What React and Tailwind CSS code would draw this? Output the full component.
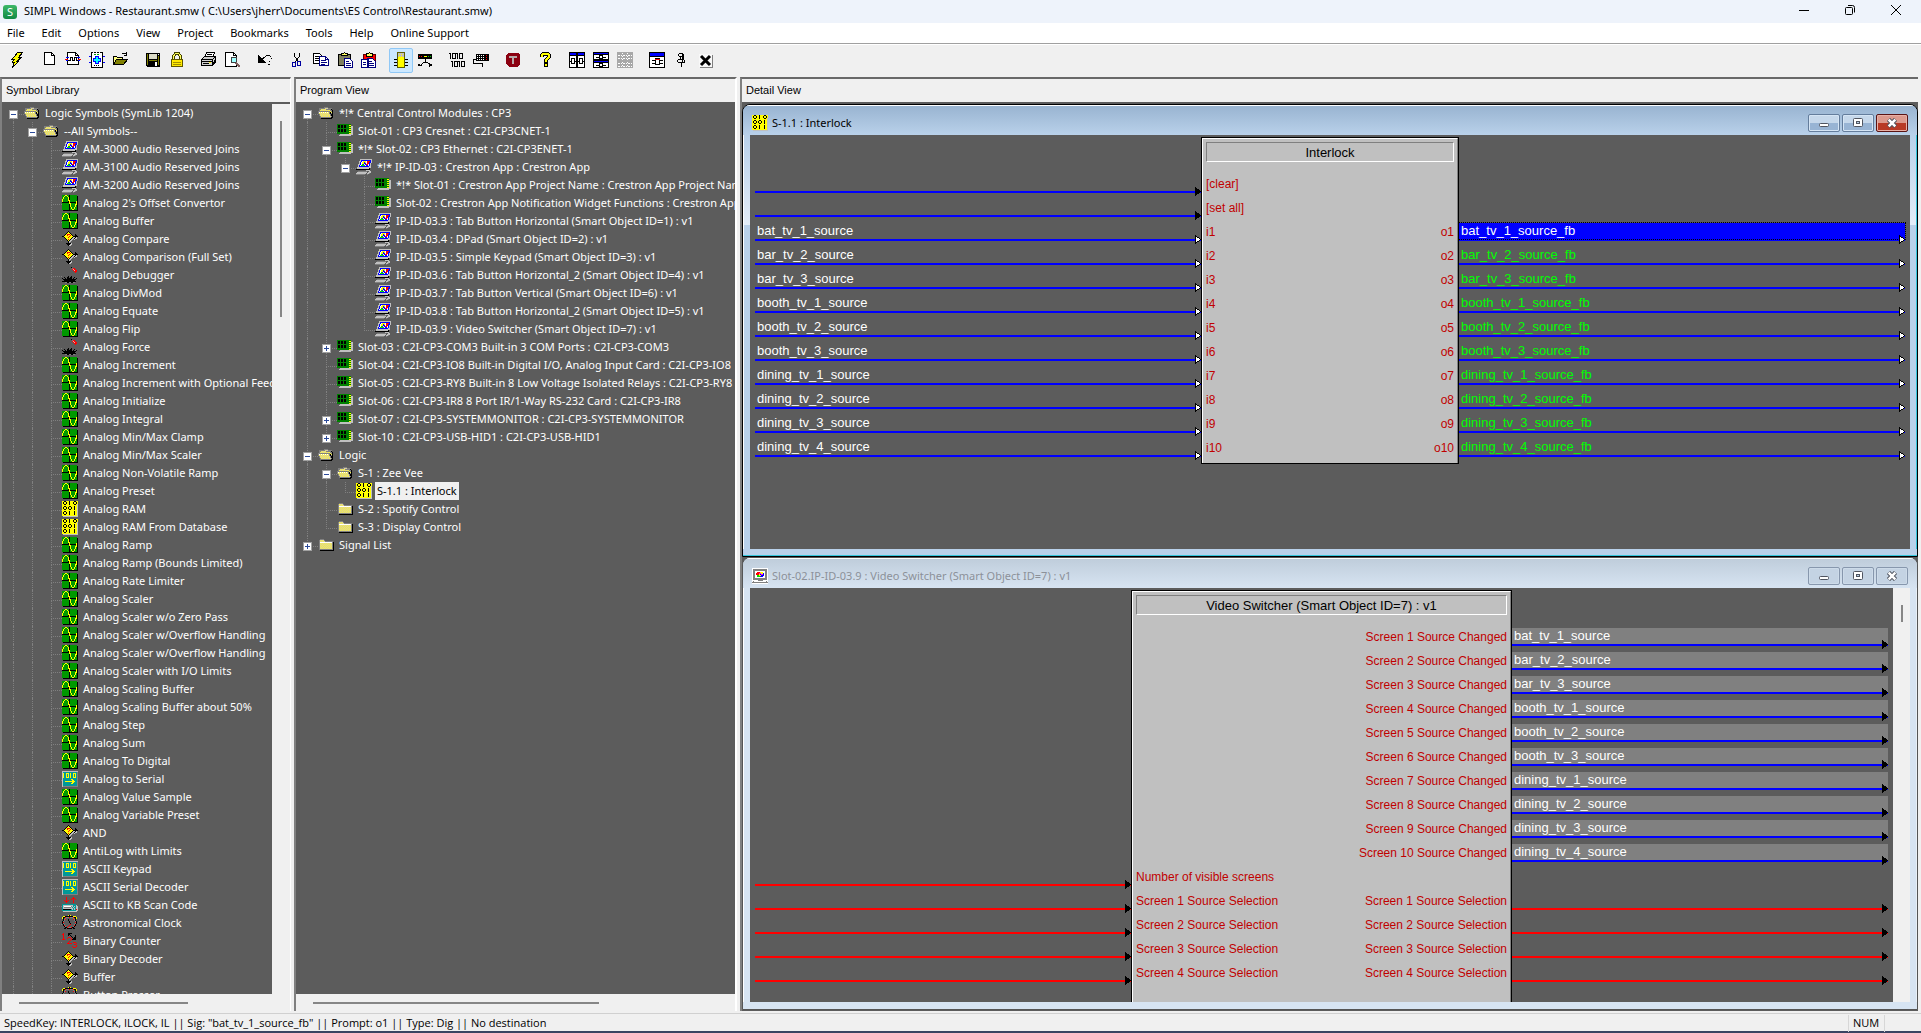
import React from "react";

const COLORS = {
  k: "#000000", w: "#ffffff", y: "#ffff00", o: "#808000", g: "#009900", G: "#008000",
  b: "#0000ff", r: "#ff0000", s: "#c0c0c0", d: "#808080", n: "#000080", m: "#800000",
  c: "#00ffff", t: "#009999", l: "#00e000", a: "#d8d0a0", Y: "#f8f048", p: "#ff00ff",
};

const MAPS = {
  sine: [
    "gggyyggkggggggg.", "ggyggygkgggggggk", "gyggggykgggggggk", "gyggggykgggggggk",
    "ygggggykgggggggk", "ygggggyygggggggk", "ygggggkyggggggyk", "kkkkkkkykkkkkkyk",
    "gggggggyygggggyk", "gggggggkyggggyyk", "gggggggkyggggygk", "gggggggkyggggygk",
    "gggggggkgyggyggk", "gggggggkgyggyggk", "gggggggkggyygggk", ".kkkkkkkkkkkkkkk",
  ],
  ram: [
    "yykkyyykyyyykkyy", "ykyykyykyyykyyky", "ykyykyykyyykyyky", "yykkyyykyyyykkys",
    "yyyyyyyyyyyyyyys", "yykkyyykkyyykyys", "ykyykykyykyykyys", "ykyykykyykyykyys",
    "yykkyyykkyyykyys", "yyyyyyyyyyyyyyys", "yykkyyykyyyykyys", "ykyykyykyyyykyys",
    "ykyykyykyyyykyys", "yykkyyykyyyykyys", "yyyyyyyyyyyyyyys", ".sssssssssssssss",
  ],
  panel: [
    "....ssssssssssss", "....sbbbbbbbbbbs", "...ssbwyyywrrrbs", "...sbwyybywrrbbs",
    "...sbwyybbwrrbs.", "..ssbwlbwbrrwbs.", "..sbwllllwbbwbs.", "..sbbbbbbbbbbss.",
    ".ssssssssssssss.", ".ssssssssssssk..", "kkkkkkkkkkkkkk..", "..........ssss..",
    "..ddddddddd..ss.", ".ssssssssss.sss.", "ssssssssss.ssd..", "ddddddddd..d....",
  ],
  card: [
    "................", "GGGGGGGGGGGGGG..", "GkkGkkGkkGGGyy..", "GkkGkkGkkGGGGGss",
    "GkkGkkGkkGGGyyss", "GGGGGGGGGGGGGGss", "GkkGkkGkkGGGyyss", "GkkGkkGkkGGGGGss",
    "GkkGkkGkkGGGyyss", "GGGGGGGGGGGGGGss", "GGGGGGGGGGGGyyss", "...sssssssssssss",
    "..ssssssssssss..", "................", "................", "................",
  ],
  folderOpen: [
    "................", "................", "......dddd......", ".ddddddaaadddd..",
    ".ddYaYaYdddddk..", ".dYaYaYaYaYYddk.", "ddddddddddddYdk.", "dwYwYwYwYwYdkYk.",
    "dYaYaYaYaYadkdk.", ".dYaYaYaYaYadkk.", ".daYaYaYaYaYdkk.", "..dYaYaYaYaYadk.",
    "..dddddddddddkk.", "...kkkkkkkkkkk..", "................", "................",
  ],
  folder: [
    "................", "................", "..dddd..........", ".dYaYad.........",
    ".daYaYadddddddd.", ".dwwwwwwwwwwwwdk", ".dYaYaYaYaYaYadk", ".daYaYaYaYaYaYdk",
    ".dYaYaYaYaYaYadk", ".daYaYaYaYaYaYdk", ".dYaYaYaYaYaYadk", ".daYaYaYaYaYaYdk",
    ".ddddddddddddddk", "..kkkkkkkkkkkkkk", "................", "................",
  ],
  gate: [
    "......k.........", ".....kyk........", "....kyyyk.......", "...kyrrryk...k..",
    "..kyyryyryk..kk.", "kkyyyyyryyykkkkk", "..kyyyryyykssks.", "...kyyyyyksskss.",
    "....kyrykss.s...", ".....kykss......", "......kss.......", "......ks........",
    "....kkkkks......", ".....kkkss......", "......kss.......", "................",
  ],
  debug: [
    ".........k......", "..........drr...", "..........rsrr..", "...........rsrr.",
    "............rrr.", ".............r..", "................", "................",
    "................", "......k..k......", "..k..kk.kk..k...", "k..k.kkkkk.k..k.",
    ".kkkkkkkkkkkkk..", "..kkkkkkkkkkk...", "kkkkkkkkkkkkkk..", "...ddkkddkkdd...",
  ],
  serial: [
    "ssssssssssssssss", "sttttttttttttttd", "syttyyytyttyyytd", "syttytytyttytytd",
    "syttytytyttytytd", "syttytytyttytytd", "syttyyytyttyyytd", "sttttttttttttttd",
    "sttttttttyyttttd", "stttttttttyytttd", "sttyyyyyyyyyyttd", "stttttttttyytttd",
    "sttttttttyyttttd", "sttttttttttttttd", "sttttttttttttttd", "sddddddddddddddd",
  ],
  scan: [
    "....r......r....", "....r.....rrr...", "....r....r.r.r..", "..r.r.r....r....",
    "...rrr.....r....", "....r......r....", "................", "tttttttttttttt..",
    "tssssssssssttts.", "tswwwwwwwdststss", "tsdddddddststtss", "tsssssssssststss",
    "tkkkkkkkktststrs", "ttttttttttttttss", ".ssssssssssssss.", "................",
  ],
  clock: [
    "......yky.......", ".yykkkkkkkkyyy..", "ykkrdddrdddrkky.", "yk.d.......d.ky.",
    ".kdr..k....rdk..", ".kd...k.....dk..", "kd.....k.....dk.", "kr.....k.....rk.",
    "kd......k....dk.", ".kd.....r...dk..", ".kr....r....rk..", "..kd..r....dk...",
    "...kkrdddrkk....", "..kk.kkkkk.kk...", "................", "................",
  ],
  counter: [
    ".r....kkkk......", "rr....kk........", ".r....k.k....k..", ".r.......k...k..",
    ".r....rrr.k.kk..", ".r...r...r.kkk..", "rrr......rkkkk..", "........r.......",
    ".......r........", "......r....rrr..", ".....rrrrr....r.", "............rr..",
    "..............r.", "..........r...r.", "...........rrr..", "................",
  ],
  monitor: [
    "wwwwwwwwwwwwwwww", "wddddddddddddddw", "wddddddddddddddw", "wddwwwwwwwwwwddw",
    "wddwwrrryyywwddw", "wddwrrrppyybwddw", "wddwrrrybppbwddw", "wddwwllyybbbwddw",
    "wddwwlllbbbwwddw", "wddwwwwwwwwwwddw", "wddddddddddddddw", "wddddddddddddddw",
    "wwwwwwdddddwwwww", "wdwwwwwwwwwwwwdw", "dddddddddddddddd", "wwwwwwwwwwwwwwww",
  ],
};

function Pix({ name }) {
  const rects = [];
  MAPS[name].forEach((row, y) => {
    let x = 0;
    while (x < row.length) {
      let end = x + 1;
      while (end < row.length && row[end] === row[x]) end += 1;
      if (COLORS[row[x]]) {
        rects.push(<rect key={`${x}-${y}`} x={x} y={y} width={end - x} height="1" fill={COLORS[row[x]]} />);
      }
      x = end;
    }
  });
  return (
    <svg viewBox="0 0 16 16" className="size-4 shrink-0" shapeRendering="crispEdges" aria-hidden="true">
      {rects}
    </svg>
  );
}

/* ---------- Toolbar drawings ---------- */

const TOOLS = {
  bolt: <path d="M8.5.5h5l-4 5h3l-5 4h2l-6 6 2-5.500h-2l2-3h-2z" fill="#ff0" stroke="#000" />,
  page: <g><path d="M3.500.5h7l3 3v9h-10z" fill="#fff" stroke="#000" /><path d="M10.500.5v3h3" stroke="#000" /></g>,
  pageSym: (
    <g>
      <path d="M2.500.5h8l3 3v9h-11z" fill="#fff" stroke="#000" />
      <path d="M10.500.5v3h3" stroke="#000" />
      <path d="M1 5.500h3M1 8.500h3M12 5.500h3M12 8.500h3" stroke="#00f" />
      <path d="M0 7.500h3M13 7.500h3" stroke="#f00" />
      <path d="M3 8.500h2v-3h2v3h2v-3h2v3h2" stroke="#000" />
    </g>
  ),
  chip: (
    <g>
      <path d="M2.500.5h11v15h-11z" fill="#fff" />
      <path d="M2.500 0v16M13.500 0v16M2 15.500h12" stroke="#000" />
      <path d="M2 .5h12" stroke="#000" strokeDasharray="2 1" />
      <path d="M5 2.500h6" stroke="#00a000" strokeWidth="1" strokeDasharray="2 1" />
      <path d="M0 4.500h2M14 4.500h2M0 10.500h2M14 10.500h2" stroke="#00f" />
      <path d="M6.500 4.500h3v2h2v3h-2v2h-3v-2h-2v-3h2z" fill="#0ff" stroke="#00f" />
      <path d="M5 13.500h6" stroke="#000" strokeDasharray="1 1" />
    </g>
  ),
  open: (
    <g>
      <path d="M.5 12.500v-8h3l1 1h5v2" fill="#ffff80" stroke="#000" />
      <path d="M.5 12.500l3-5h11l-4 5z" fill="#808000" stroke="#000" />
      <path d="M8.500 2.500c1-2 3-2 5 0M13.500 0v3.500h-3" stroke="#000" />
    </g>
  ),
  save: (
    <g>
      <path d="M1 1h14v14H2l-1-1z" fill="#000" /><path d="M2 2h1v11H2zM13 4h1v9h-1zM4 8h8v1H4z" fill="#808000" />
      <path d="M4 2h8v5H4z" fill="#dcdcc8" /><path d="M10 10h2v4h-2z" fill="#fff" /><path d="M13 2h1v1h-1z" fill="#fff" />
    </g>
  ),
  lock: (
    <g>
      <path d="M4.500 8V4l2-2.500h3l2 2.500v4" stroke="#404000" strokeWidth="3" />
      <path d="M4.500 8V4l2-2.500h3l2 2.500v4" stroke="#ffff60" />
      <path d="M2.500 7.500h11v7h-11z" fill="#ffe800" stroke="#605800" /><path d="M4 10.500h8M4 12.500h8" stroke="#a09000" />
    </g>
  ),
  print: (
    <g>
      <path d="M5.500.5h8l-2 5h-8z" fill="#fff" stroke="#000" /><path d="M6 2.500h5M5 4.500h5" stroke="#000" />
      <path d="M.5 7.500l3-3h11v6l-3 3H.5z" fill="#d0d0d0" stroke="#000" />
      <path d="M.5 7.500h11v6M11.500 7.500l3-3M1 9.500h10M2 11.500h6M12 11.500l3-3M13 9.500l2-2" stroke="#000" />
      <path d="M8 10.500h2" stroke="#ff0" />
    </g>
  ),
  preview: (
    <g>
      <path d="M.5.5h8l3 3v10.500H.5z" fill="#fff" stroke="#000" /><path d="M8.500.5v3h3" stroke="#000" />
      <circle cx="9" cy="8" r="3" fill="#a0ffff" stroke="#404040" /><path d="M11 11l4 4" stroke="#806060" strokeWidth="2" />
    </g>
  ),
  undo: (
    <g>
      <path d="M1 3v8h8z" fill="#000" /><path d="M4 8l5-4 3-1 2 2v3l-2 2" stroke="#000" strokeDasharray="9 1 2 1 1 1 1 1" />
      <path d="M11 12.500h2M8 10.500h1" stroke="#000" />
    </g>
  ),
  cut: (
    <g>
      <path d="M5.500 1v3l4 6M10.500 1v3l-4 6" stroke="#000" />
      <g stroke="#0000a0"><rect x="8.500" y="9.500" width="3" height="4" rx="1" /><rect x="3.500" y="10.500" width="3" height="4" rx="1" /></g>
    </g>
  ),
  copy: (
    <g>
      <path d="M.5 1.500h6l2 2v8h-8z" fill="#fff" stroke="#000" />
      <path d="M2 4.500h4M2 6.500h5M2 8.500h4" stroke="#000" />
      <path d="M6.500 4.500h6l3 3v6h-9z" fill="#fff" stroke="#000080" />
      <path d="M12.500 4.500v3h3M8 8.500h5M8 10.500h6M8 12.500h4" stroke="#000080" />
    </g>
  ),
  paste: (
    <g>
      <path d="M1.500 2.500h12v11h-12z" fill="#808060" stroke="#000" /><path d="M4.500 3.500v-2h2l1-1 1 1h2v2z" fill="#ffff60" stroke="#000" />
      <path d="M7.500 6.500h5l3 3v6h-8z" fill="#fff" stroke="#000080" /><path d="M9 9.500h3M9 11.500h5M9 13.500h5" stroke="#000080" />
    </g>
  ),
  pasteSpecial: (
    <g>
      <path d="M2.500 2.500h12v11h-12z" fill="#f00" stroke="#600000" /><path d="M5.500 4.500v-3h2l1-1 1 1h2v3z" fill="#ffff60" stroke="#000" />
      <path d="M.5 7.500h7v8h-7zM6.500 6.500h5l3 3v6h-8z" fill="#fff" stroke="#000080" />
      <path d="M2 10.500h3M2 12.500h3M8 9.500h3M8 11.500h5M8 13.500h5" stroke="#000080" />
    </g>
  ),
  device: (
    <g>
      <path d="M1 7.500h14M1 10.500h14M1 13.500h14" stroke="#000" />
      <path d="M4.500.5h7v15h-7z" fill="#ff0" stroke="#606000" />
      <path d="M5 1h6v4H5z" fill="#c0c0c0" /><path d="M6 2.500h4M6 4.500h4" stroke="#ff0" strokeDasharray="1 1" />
    </g>
  ),
  network: (
    <g>
      <path d="M1 2h14v5H1z" fill="#000" /><path d="M2 4.500h4" stroke="#f00" strokeDasharray="1 1" /><path d="M7 4.500h3" stroke="#ff0" /><path d="M11 4.500h3" stroke="#0c0" strokeDasharray="1 1" />
      <path d="M8.500 7v3h-2l-2 3H2M8.500 10h2l2 3H15M3.500 11.500l-2 1.500 2 1.500M12.500 11.500l2 1.500-2 1.500" stroke="#000" />
    </g>
  ),
  bits: (
    <g stroke="#000">
      <path d="M1.500 1v6M8.500 1v6M0 1.500h2M7 1.500h2M3.500 9v6M10.500 9v6M2 9.500h2M9 9.500h2" />
      <rect x="3.500" y="1.500" width="3" height="5" rx="1" /><rect x="10.500" y="1.500" width="3" height="5" rx="1" />
      <rect x="5.500" y="9.500" width="3" height="5" rx="1" /><rect x="12.500" y="9.500" width="3" height="5" rx="1" />
    </g>
  ),
  keyboard: (
    <g>
      <path d="M3 2h13v7H3z" fill="#000" /><path d="M4 3.500h8M4 5.500h8M4 7.500h8" stroke="#fff" strokeDasharray="1 1" />
      <path d="M13 3.500h2M13 5.500h2M13 7.500h2" stroke="#f00" strokeDasharray="1 1" /><path d="M2.500 7.500h-2v4h9v3" stroke="#000" />
    </g>
  ),
  shield: (
    <g>
      <path d="M3 1h10l2 2v9l-3 3H4l-3-3V3z" fill="#8b0010" /><path d="M4 4h8v2H9v6H7V6H4z" fill="#b8a8a8" />
    </g>
  ),
  help: (
    <g>
      <path d="M5 5V3l2-1.500h3L12 3v2L9 8v3" stroke="#000" strokeWidth="4" />
      <path d="M5 5V3l2-1.500h3L12 3v2L9 8v2" stroke="#ff0" strokeWidth="2" />
      <path d="M7.500 11.500h3v3h-3z" fill="#ff0" stroke="#000" />
    </g>
  ),
  tileV: (
    <g>
      <path d="M0 0h16v16H0z" fill="#000" /><path d="M1 1h6v2H1zM9 1h6v2H9z" fill="#00f" /><path d="M1 4h6v11H1zM9 4h6v11H9z" fill="#fff" />
      <path d="M2.500 6.500h3v5h-3zM10.500 6.500h3v5h-3zM0 9.500h2M14 9.500h2M6 9.500h4" stroke="#000" />
    </g>
  ),
  tileH: (
    <g>
      <path d="M0 0h16v16H0z" fill="#000" /><path d="M1 1h14v1H1zM1 9h14v1H1z" fill="#00f" /><path d="M1 3h14v4H1zM1 11h14v4H1z" fill="#fff" />
      <path d="M6.500 3.500h3v3h-3zM6.500 11.500h3v3h-3zM3 5.500h3M10 5.500h3M3 13.500h3M10 13.500h3" stroke="#000" />
    </g>
  ),
  cascade: (
    <g>
      <path d="M0 0h16v16H0z" fill="#a8a8a8" />
      <path d="M1 3.500h14M1 6.500h14M1 11.500h14M1 14.500h14" stroke="#fff" strokeDasharray="2 1 1 1" />
      <path d="M5.500 1v14M10.500 1v14" stroke="#fff" strokeDasharray="1 2" />
    </g>
  ),
  windowChip: (
    <g>
      <path d="M.5.5h15v15H.5z" fill="#fff" stroke="#000" /><path d="M1 1h14v3H1z" fill="#00f" /><path d="M1 4.500h14" stroke="#000" />
      <path d="M6.500 6.500h4v6h-4z" fill="#fff" stroke="#000" /><path d="M6 7.500h5" stroke="#f00" /><path d="M3 8.500h3M3 11.500h3M11 8.500h3M11 11.500h3" stroke="#000" />
    </g>
  ),
  pin: (
    <g stroke="#000">
      <path d="M6 1.500h4M5.500 2v2M10.500 2v2M6 4.500h5M7.500 5v2M10.500 5v2M5 7.500h6M4.500 8v2M11.500 8v2M5 10.500h7" />
      <path d="M9.500 2v8" /><path d="M8.500 11v4" />
    </g>
  ),
  close: (
    <g>
      <path d="M2 2h13v13H2z" fill="#f8f8f8" /><path d="M15.500 3v12.500H3" stroke="#808080" />
      <path d="M4 4l9 9M13 4l-9 9" stroke="#000" strokeWidth="3" shapeRendering="auto" />
    </g>
  ),
};

const TOOL_GROUPS = [
  [["bolt", "Speed key"]],
  [["page", "New"], ["pageSym", "New symbol"], ["chip", "New macro"], ["open", "Open"]],
  [["save", "Save"], ["lock", "Protect"]],
  [["print", "Print"], ["preview", "Print preview"]],
  [["undo", "Undo"]],
  [["cut", "Cut"], ["copy", "Copy"], ["paste", "Paste"], ["pasteSpecial", "Paste special"]],
  [["device", "Program manager"], ["network", "Configure"]],
  [["bits", "Compile"], ["keyboard", "Transfer"]],
  [["shield", "Toolbox"]],
  [["help", "Help"]],
  [["tileV", "Tile vertically"], ["tileH", "Tile horizontally"], ["cascade", "Cascade"]],
  [["windowChip", "Symbol window"], ["pin", "Pin"], ["close", "Close"]],
];

/* ---------- Tree data ---------- */

const kinds = { s: "sine", p: "panel", g: "gate", d: "debug", r: "ram", t: "serial", k: "scan", c: "clock", n: "counter" };

const SYMBOLS = [
  "p:AM-3000 Audio Reserved Joins", "p:AM-3100 Audio Reserved Joins", "p:AM-3200 Audio Reserved Joins",
  "s:Analog 2's Offset Convertor", "s:Analog Buffer", "g:Analog Compare", "g:Analog Comparison (Full Set)",
  "d:Analog Debugger", "s:Analog DivMod", "s:Analog Equate", "s:Analog Flip", "d:Analog Force",
  "s:Analog Increment", "s:Analog Increment with Optional Feedback", "s:Analog Initialize", "s:Analog Integral",
  "s:Analog Min/Max Clamp", "s:Analog Min/Max Scaler", "s:Analog Non-Volatile Ramp", "s:Analog Preset",
  "r:Analog RAM", "r:Analog RAM From Database", "s:Analog Ramp", "s:Analog Ramp (Bounds Limited)",
  "s:Analog Rate Limiter", "s:Analog Scaler", "s:Analog Scaler w/o Zero Pass", "s:Analog Scaler w/Overflow Handling",
  "s:Analog Scaler w/Overflow Handling", "s:Analog Scaler with I/O Limits", "s:Analog Scaling Buffer",
  "s:Analog Scaling Buffer about 50%", "s:Analog Step", "s:Analog Sum", "s:Analog To Digital",
  "t:Analog to Serial", "s:Analog Value Sample", "s:Analog Variable Preset", "g:AND", "s:AntiLog with Limits",
  "t:ASCII Keypad", "t:ASCII Serial Decoder", "k:ASCII to KB Scan Code", "c:Astronomical Clock",
  "n:Binary Counter", "g:Binary Decoder", "g:Buffer", "c:Button Presser",
].map((s) => ({ icon: kinds[s[0]], label: s.slice(2) }));

const LIBRARY = [
  {
    icon: "folderOpen", label: "Logic Symbols (SymLib 1204)", open: true, more: true,
    children: [{ icon: "folderOpen", label: "--All Symbols--", open: true, more: true, children: SYMBOLS }],
  },
];

const PROGRAM = [
  {
    icon: "folderOpen", label: "*!* Central Control Modules : CP3", open: true,
    children: [
      { icon: "card", label: "Slot-01 : CP3 Cresnet : C2I-CP3CNET-1" },
      {
        icon: "card", label: "*!* Slot-02 : CP3 Ethernet : C2I-CP3ENET-1", open: true,
        children: [
          {
            icon: "panel", label: "*!* IP-ID-03 : Crestron App : Crestron App", open: true,
            children: [
              { icon: "card", label: "*!* Slot-01 : Crestron App Project Name : Crestron App Project Name" },
              { icon: "card", label: "Slot-02 : Crestron App Notification Widget Functions : Crestron App" },
              { icon: "panel", label: "IP-ID-03.3 : Tab Button Horizontal (Smart Object ID=1) : v1" },
              { icon: "panel", label: "IP-ID-03.4 : DPad (Smart Object ID=2) : v1" },
              { icon: "panel", label: "IP-ID-03.5 : Simple Keypad (Smart Object ID=3) : v1" },
              { icon: "panel", label: "IP-ID-03.6 : Tab Button Horizontal_2 (Smart Object ID=4) : v1" },
              { icon: "panel", label: "IP-ID-03.7 : Tab Button Vertical (Smart Object ID=6) : v1" },
              { icon: "panel", label: "IP-ID-03.8 : Tab Button Horizontal_2 (Smart Object ID=5) : v1" },
              { icon: "panel", label: "IP-ID-03.9 : Video Switcher (Smart Object ID=7) : v1" },
            ],
          },
        ],
      },
      { icon: "card", label: "Slot-03 : C2I-CP3-COM3 Built-in 3 COM Ports : C2I-CP3-COM3", open: false },
      { icon: "card", label: "Slot-04 : C2I-CP3-IO8 Built-in Digital I/O, Analog Input Card : C2I-CP3-IO8" },
      { icon: "card", label: "Slot-05 : C2I-CP3-RY8 Built-in 8 Low Voltage Isolated Relays : C2I-CP3-RY8" },
      { icon: "card", label: "Slot-06 : C2I-CP3-IR8 8 Port IR/1-Way RS-232 Card : C2I-CP3-IR8" },
      { icon: "card", label: "Slot-07 : C2I-CP3-SYSTEMMONITOR : C2I-CP3-SYSTEMMONITOR", open: false },
      { icon: "card", label: "Slot-10 : C2I-CP3-USB-HID1 : C2I-CP3-USB-HID1", open: false },
    ],
  },
  {
    icon: "folderOpen", label: "Logic", open: true,
    children: [
      {
        icon: "folderOpen", label: "S-1 : Zee Vee", open: true,
        children: [{ icon: "ram", label: "S-1.1 : Interlock", selected: true }],
      },
      { icon: "folder", label: "S-2 : Spotify Control" },
      { icon: "folder", label: "S-3 : Display Control" },
    ],
  },
  { icon: "folder", label: "Signal List", open: false },
];

function TreeNodes({ nodes, guides = [], openEnded = false }) {
  return (
    <ul role={guides.length ? "group" : "tree"}>
      {nodes.map((node, i) => {
        const last = i === nodes.length - 1 && !node.more && !openEnded;
        const root = guides.length === 0 && i === 0;
        return (
          <li key={i} role="treeitem" aria-selected={!!node.selected}>
            <div className="flex h-[18px] items-start whitespace-nowrap">
              {guides.map((on, g) => (
                <span key={g} className={`ml-2 h-full w-[11px] shrink-0 ${on ? "border-l border-dotted border-[#808080]" : ""}`} />
              ))}
              <span className="relative h-full w-[19px] shrink-0 pl-2">
                <span className={`block h-[11px] border-b border-dotted border-[#808080] ${root ? "" : "border-l"}`} />
                <span className={`block h-[7px] border-dotted border-[#808080] ${last ? "" : "border-l"}`} />
                {node.open !== undefined && (
                  <button
                    aria-label={`${node.open ? "Collapse" : "Expand"} ${node.label}`}
                    className="absolute top-1.5 left-1 flex size-[9px] items-center justify-center border border-[#a0a0a0] bg-white"
                  >
                    <svg viewBox="0 0 5 5" className="size-[5px]" shapeRendering="crispEdges">
                      <path d={node.open ? "M0 2h5v1H0z" : "M0 2h5v1H0zM2 0h1v5H2z"} fill="#2b4a9a" />
                    </svg>
                  </button>
                )}
              </span>
              <span className="mt-px mr-[3px] flex"><Pix name={node.icon} /></span>
              <span className={`px-0.5 leading-[18px] ${node.selected ? "bg-[#f0f0f0] text-black" : ""}`}>{node.label}</span>
            </div>
            {node.children && (
              <TreeNodes nodes={node.children} guides={[...guides, !last]} openEnded={!!node.more} />
            )}
          </li>
        );
      })}
    </ul>
  );
}

function Panel({ title, className, children }) {
  return (
    <section className={`flex min-h-0 flex-col border-t-2 border-l-2 border-t-[#696969] border-l-[#808080] ${className}`}>
      <h2 className="flex h-[23px] shrink-0 items-center pl-1 font-['Liberation_Sans',sans-serif] text-[11px]">{title}</h2>
      {children}
    </section>
  );
}

/* ---------- Detail view ---------- */

function Arrow({ hollow }) {
  return (
    <svg viewBox="0 0 6 9" className="absolute right-0 -bottom-[3px] h-[9px] w-1.5" shapeRendering="crispEdges" aria-hidden="true">
      <path d="M0 0h1v1h1v1h2v1h1v1h1v1H5v1H4v1H2v1H1v1H0z" fill="#000" />
      {hollow && <path d="M1 2h1v1h2v1h1v1H4v1H2v1H1z" fill="#fff" />}
    </svg>
  );
}

function Wire({ wire }) {
  if (!wire) return <div className="h-6" />;
  const { name, red, hollow, tone } = wire;
  const text = tone === "green" ? "text-[#00ff00]" : "text-white";
  const fill = tone === "gray" ? "bg-[#808080]" : tone === "selected" ? "bg-[#0000ff] outline outline-dotted outline-black" : "";
  return (
    <div className="h-6 pt-1.5">
      <div className="relative">
        <div className={`h-4 pl-0.5 text-[13px] leading-4 ${text} ${fill}`}>{name}</div>
        <div className={`h-0.5 ${red ? "bg-[#ff0000]" : "bg-[#0000ff]"}`} />
        <Arrow hollow={hollow} />
      </div>
    </div>
  );
}

function Diagram({ title, rows, blockClass }) {
  return (
    <div className="flex min-w-0 flex-1 overflow-hidden bg-[#5c5c5c] font-['Liberation_Sans',sans-serif]">
      <div className="min-w-0 flex-1 pt-[34px] pl-[5px]">
        {rows.map((r, i) => <Wire key={i} wire={r.in} />)}
      </div>
      <div className={`mt-0.5 shrink-0 border-black bg-[#c0c0c0] ${blockClass}`}>
        <div className="h-full border-t border-r border-l border-t-white border-r-[#808080] border-l-white p-[3px] pb-1.5">
          <div className="h-5 border border-t-[#808080] border-r-white border-b-white border-l-[#808080] text-center text-[13px] leading-[19px] text-black">
            {title}
          </div>
          <div className="pt-[7px] text-xs text-[#c00000]">
            {rows.map((r, i) => (
              <div key={i} className="flex h-6 justify-between pt-1.5 leading-[18px]">
                <span>{r.left}</span>
                <span>{r.right}</span>
              </div>
            ))}
          </div>
        </div>
      </div>
      <div className="min-w-0 flex-1 pt-[34px] pr-[5px]">
        {rows.map((r, i) => <Wire key={i} wire={r.out} />)}
      </div>
    </div>
  );
}

const SOURCES = [
  "bat_tv_1_source", "bar_tv_2_source", "bar_tv_3_source", "booth_tv_1_source", "booth_tv_2_source",
  "booth_tv_3_source", "dining_tv_1_source", "dining_tv_2_source", "dining_tv_3_source", "dining_tv_4_source",
];

const INTERLOCK_ROWS = [
  { left: "[clear]", in: { name: "" } },
  { left: "[set all]", in: { name: "" } },
  ...SOURCES.map((name, i) => ({
    left: `i${i + 1}`,
    right: `o${i + 1}`,
    in: { name, hollow: true },
    out: { name: `${name}_fb`, hollow: true, tone: i === 0 ? "selected" : "green" },
  })),
];

const SWITCHER_ROWS = [
  ...SOURCES.map((name, i) => ({ right: `Screen ${i + 1} Source Changed`, out: { name, tone: "gray" } })),
  { left: "Number of visible screens", in: { red: true } },
  ...[1, 2, 3, 4].map((n) => ({
    left: `Screen ${n} Source Selection`,
    right: `Screen ${n} Source Selection`,
    in: { red: true },
    out: { red: true },
  })),
];

function CaptionButtons({ active }) {
  const base = "flex h-[18px] w-8 items-center justify-center rounded-[2px] border inset-ring";
  const plain = active
    ? "border-[#647d9c] bg-linear-to-b from-[#c6d8eb] from-50% to-[#98b4d4] to-50% inset-ring-[#d5e5f5]"
    : "border-[#8797ad] bg-[#c4d3e3] inset-ring-[#cddbe9]";
  const red = "border-[#5a1414] bg-linear-to-b from-[#dc9a8e] from-50% to-[#b83a26] to-50% inset-ring-[#e8b0a6]";
  return (
    <div className="flex gap-0.5">
      <button aria-label="Minimize" className={`${base} ${plain}`}>
        <svg viewBox="0 0 12 10" className="h-2.5 w-3"><rect x="1.5" y="5.5" width="9" height="3" rx="1" fill="#fff" stroke="#505560" /></svg>
      </button>
      <button aria-label="Restore" className={`${base} ${plain}`}>
        <svg viewBox="0 0 12 10" className="h-2.5 w-3">
          <rect x="1.5" y=".5" width="9" height="8" rx="1" fill="#fff" stroke="#505560" /><rect x="4.500" y="3.500" width="3" height="2" fill="#b9cfe6" stroke="#505560" />
        </svg>
      </button>
      <button aria-label="Close" className={`${base} ${active ? red : plain}`}>
        <svg viewBox="0 0 12 10" className="h-2.5 w-3">
          <path d="M2.500 1.500l7 7M9.500 1.500l-7 7" stroke="#505560" strokeWidth="4.500" /><path d="M2.700 1.700l6.600 6.600M9.300 1.700l-6.600 6.600" stroke="#fff" strokeWidth="2.500" />
        </svg>
      </button>
    </div>
  );
}

function ChildWindow({ icon, title, active, children }) {
  const frame = active
    ? "border-black bg-[#b9d1ea]"
    : "border-[#555555] bg-[#d7e4f2]";
  const bar = active
    ? "from-[#99b4d1] to-[#b9d1ea] text-black"
    : "from-[#bfcddb] to-[#d7e4f2] text-[#8c9199]";
  const edge = active ? "bg-linear-to-b from-[#b9d1ea] to-[#e4edf8] h-[90px]" : "";
  return (
    <article className={`flex min-h-0 flex-1 flex-col overflow-hidden rounded-t-lg border ${frame}`}>
      <header className={`flex h-[30px] shrink-0 items-center border-t border-t-white bg-linear-to-b px-[9px] pt-[5px] ${bar}`}>
        <Pix name={icon} />
        <h3 className="flex-1 pl-1">{title}</h3>
        <CaptionButtons active={active} />
      </header>
      <div className={`flex min-h-0 flex-1 border-b pb-1.5 ${active ? "border-b-[#35c6dc]" : "border-b-[#d7e4f2]"}`}>
        <div className="w-[7px] border-l border-l-white"><div className={edge} /></div>
        {children}
        <div className={`w-[7px] border-r ${active ? "border-r-[#35c6dc]" : "border-r-[#e8f0f8]"}`}><div className={edge} /></div>
      </div>
    </article>
  );
}

const MENUS = ["File", "Edit", "Options", "View", "Project", "Bookmarks", "Tools", "Help", "Online Support"];

export default function App() {
  return (
    <div className="flex h-screen flex-col overflow-hidden bg-[#f0f0f0] font-['Noto_Sans','Open_Sans',sans-serif] text-[11px] text-black">
      <header className="flex h-[23px] shrink-0 items-center bg-[#eef3fb] pl-[3px]">
        <span className="flex size-[14px] items-center justify-center rounded-[3px] bg-linear-to-b from-[#3cb86a] to-[#0f8a44] text-[11px] leading-none text-white">S</span>
        <h1 className="flex-1 pl-[7px]">
          SIMPL Windows - Restaurant.smw ( C:\Users\jherr\Documents\ES Control\Restaurant.smw)
        </h1>
        <div className="flex h-full pr-0.5">
          <button aria-label="Minimize window" className="flex w-[46px] justify-center">
            <svg viewBox="0 0 12 12" className="mt-1 size-3" fill="none" stroke="#000"><path d="M1 6.500h10" /></svg>
          </button>
          <button aria-label="Restore window" className="flex w-[46px] justify-center">
            <svg viewBox="0 0 12 12" className="mt-1 size-3" fill="none" stroke="#000">
              <rect x="1.500" y="3.500" width="7" height="7" rx="1" /><path d="M4 1.500h4.500a2 2 0 0 1 2 2V8.500" />
            </svg>
          </button>
          <button aria-label="Close window" className="flex w-[46px] justify-center">
            <svg viewBox="0 0 12 12" className="mt-1 size-3" fill="none" stroke="#000"><path d="M1 1l10 10M11 1L1 11" /></svg>
          </button>
        </div>
      </header>

      <nav className="flex h-[21px] shrink-0 items-center gap-[17px] border-b border-[#a0a0a0] bg-white pl-[7px]">
        {MENUS.map((m) => <button key={m}>{m}</button>)}
      </nav>

      <div role="toolbar" className="flex h-[33px] shrink-0 items-start gap-2 border-t border-white pt-[3px] pl-[5px]">
        {TOOL_GROUPS.map((group, i) => (
          <div key={i} className="flex">
            {group.map(([id, label]) => (
              <button
                key={id}
                aria-label={label}
                className={`flex h-[25px] w-6 items-start justify-center rounded-xs border pt-[3px] ${id === "device" ? "border-[#90c8f6] bg-[#cce8ff]" : "border-transparent"}`}
              >
                <svg viewBox="0 0 16 16" className="size-4 shrink-0" fill="none" shapeRendering="crispEdges">{TOOLS[id]}</svg>
              </button>
            ))}
          </div>
        ))}
      </div>

      <main className="flex min-h-0 flex-1">
        <Panel title="Symbol Library" className="mr-[3px] w-[291px] shrink-0 border-r border-r-white">
          <div className="flex min-h-0 flex-1">
            <div className="min-w-0 flex-1 overflow-hidden bg-[#5c5c5c] pt-0.5 pl-[3px] text-white">
              <TreeNodes nodes={LIBRARY} />
            </div>
            <div className="flex w-[18px] flex-col items-center border-t-2 border-t-[#5c5c5c] pt-[17px]">
              <div className="h-[196px] w-0.5 bg-[#868686]" />
            </div>
          </div>
          <div className="flex h-[17px] shrink-0 items-center pl-[17px]">
            <div className="h-0.5 w-[169px] bg-[#868686]" />
          </div>
        </Panel>

        <Panel title="Program View" className="mr-[3px] w-[443px] shrink-0 border-r-2 border-r-white">
          <div className="min-h-0 flex-1 overflow-hidden bg-[#5c5c5c] pt-0.5 pl-[3px] text-white">
            <TreeNodes nodes={PROGRAM} />
          </div>
          <div className="flex h-[17px] shrink-0 items-center pl-[17px]">
            <div className="h-0.5 w-[286px] bg-[#868686]" />
          </div>
        </Panel>

        <Panel title="Detail View" className="mr-[3px] min-w-0 flex-1">
          <div className="flex min-h-0 flex-1 flex-col bg-[#5c5c5c] pt-0.5 pb-px">
            <ChildWindow icon="ram" title="S-1.1 : Interlock" active>
              <Diagram title="Interlock" rows={INTERLOCK_ROWS} blockClass="w-[258px] self-start border" />
            </ChildWindow>
            <ChildWindow icon="monitor" title="Slot-02.IP-ID-03.9 : Video Switcher (Smart Object ID=7) : v1">
              <Diagram title="Video Switcher (Smart Object ID=7) : v1" rows={SWITCHER_ROWS} blockClass="w-[381px] border-x border-t" />
              <div className="flex w-[17px] shrink-0 justify-center bg-[#f0f0f0] pt-[17px]">
                <div className="h-[17px] w-0.5 bg-[#868686]" />
              </div>
            </ChildWindow>
          </div>
        </Panel>
      </main>

      <footer className="mt-0.5 flex h-5 shrink-0 items-center border-t border-b-2 border-t-[#d0d0d0] border-b-[#3b4462] pt-0.5 pl-1 font-['Open_Sans',sans-serif]">
        <span className="flex-1">
          SpeedKey: INTERLOCK, ILOCK, IL || Sig: "bat_tv_1_source_fb" || Prompt: o1 || Type: Dig || No destination
        </span>
        <span className="mr-9 w-[37px] border-x border-[#d7d7d7] pl-1">NUM</span>
      </footer>
    </div>
  );
}
